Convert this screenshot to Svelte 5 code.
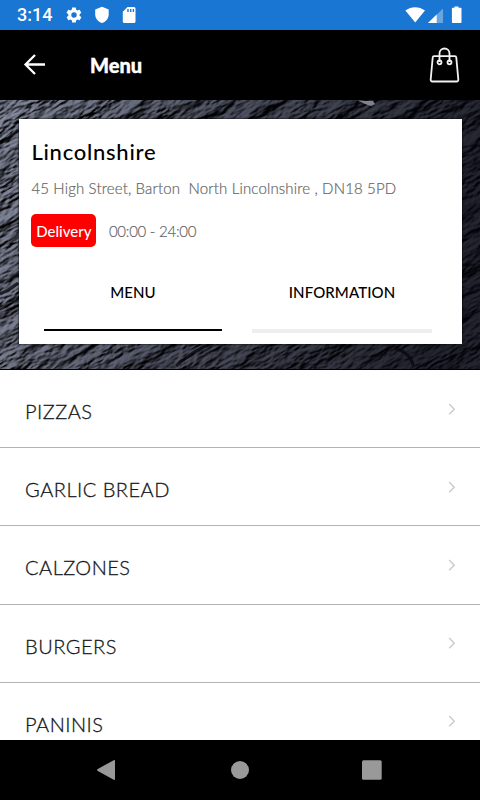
<script lang="ts">
  const address = '45 High Street, Barton \u00a0North Lincolnshire , DN18 5PD'
  const categories = ['PIZZAS', 'GARLIC BREAD', 'CALZONES', 'BURGERS', 'PANINIS']

  let activeTab = $state('menu')
</script>

<div class="screen">
  <div class="status-bar">
    <span class="clock">3:14</span>
    <svg class="gear" width="18" height="18" viewBox="0 0 24 24" fill="#fff">
      <path d="M19.4 13c0-.3.1-.6.1-1s0-.7-.1-1l2.100-1.600c.2-.2.200-.4.100-.6l-2-3.500c-.1-.2-.4-.3-.6-.2l-2.500 1c-.5-.4-1.100-.7-1.700-1l-.4-2.600c0-.3-.2-.5-.5-.5h-4c-.2 0-.5.200-.5.500l-.4 2.600c-.6.300-1.200.6-1.700 1l-2.500-1c-.2-.1-.5 0-.6.200l-2 3.500c-.1.200-.1.500.1.600L4.500 11c0 .3-.1.700-.1 1s0 .7.100 1l-2.100 1.600c-.2.200-.2.400-.1.600l2 3.500c.1.200.4.300.6.200l2.500-1c.5.400 1.100.7 1.700 1l.4 2.600c0 .3.300.5.500.5h4c.3 0 .5-.2.500-.5l.4-2.600c.6-.3 1.200-.6 1.700-1l2.500 1c.2.100.5 0 .6-.2l2-3.500c.1-.2.100-.5-.1-.6L19.400 13zM12 15.600a3.600 3.600 0 1 1 0-7.200 3.600 3.600 0 0 1 0 7.200z" />
    </svg>
    <svg class="shield" width="16" height="18" viewBox="0 0 16 18" fill="#fff">
      <path d="M8 .8 14.700 3.500V8.300C14.700 12.500 12 15.700 8 17 4 15.700 1.200 12.500 1.200 8.300V3.500z" />
    </svg>
    <svg class="sd-card" width="14" height="18" viewBox="0 0 14 18">
      <path d="M4.500 1H11a1.500 1.500 0 0 1 1.500 1.500v13A1.500 1.500 0 0 1 11 17H1.300A1.500 1.500 0 0 1-.2 15.500V5.700z" fill="#fff" />
      <path d="M5 3v3M7.700 3v3M10.400 3v3" stroke="#1976d2" stroke-width="1.400" />
    </svg>
    <svg class="signals" width="60" height="20" viewBox="0 0 60 20" fill="#fff">
      <path d="M-1.600 5.500C4 1 12 1 18 5.500L8.200 17.600z" />
      <path d="M36 3.500V18H21z" opacity=".35" />
      <path d="M29.700 9.500V18H21z" />
      <path d="M47.500 1.500h4v1.300h2c.6 0 1 .4 1 1V17c0 .6-.4 1-1 1h-7.600c-.6 0-1-.4-1-1V3.800c0-.6.4-1 1-1h1.600z" />
    </svg>
  </div>

  <header class="app-bar">
    <button class="back" aria-label="Back">
      <svg width="22" height="22" viewBox="0 0 22 22" fill="none" stroke="#fff" stroke-width="2.300">
        <path d="M22 10.500H2.800M12 1 2.500 10.500 12 20" />
      </svg>
    </button>
    <h1>Menu</h1>
    <button class="bag" aria-label="Basket">
      <svg width="32" height="38" viewBox="0 0 32 38" fill="none" stroke="#f2f2f2" stroke-width="1.800">
        <path d="M5.200 10.200h20.600q1.400 0 1.500 1.400l2 21.700q.2 2.200-1.800 2.200h-24q-2 0-1.800-2.200l2-21.700q.1-1.400 1.500-1.400z" />
        <path d="M10.500 16V7.500a5 5 0 0 1 10 0V16" />
        <circle cx="10.500" cy="16.300" r="2" />
        <circle cx="20.500" cy="16.300" r="2" />
      </svg>
    </button>
  </header>

  <section class="hero">
    <svg class="slate" width="480" height="270" viewBox="0 0 480 270">
      <defs>
        <filter id="grain" x="0" y="0" width="100%" height="100%" color-interpolation-filters="sRGB">
          <feTurbulence type="fractalNoise" baseFrequency="0.02 0.06" numOctaves="5" seed="8" result="coarse" />
          <feTurbulence type="fractalNoise" baseFrequency="0.12 0.4" numOctaves="3" seed="3" result="fine" />
          <feComposite in="coarse" in2="fine" operator="arithmetic" k2="0.75" k3="0.25" />
          <feColorMatrix type="matrix" values="0 0 0 0 0  0 0 0 0 0  0 0 0 0 0  1 0 0 0 0" />
          <feDiffuseLighting surfaceScale="8" diffuseConstant="1" lighting-color="#8d93a8">
            <feDistantLight azimuth="255" elevation="42" />
          </feDiffuseLighting>
        </filter>
        <linearGradient id="shade" x1="0" y1="0" x2="1" y2="0.15">
          <stop offset="0" stop-color="#000" stop-opacity="0" />
          <stop offset="0.45" stop-color="#03030a" stop-opacity="0.4" />
          <stop offset="1" stop-color="#03030a" stop-opacity="0.75" />
        </linearGradient>
      </defs>
      <g transform="rotate(-30 240 135)">
        <rect x="-80" y="-150" width="640" height="570" filter="url(#grain)" />
      </g>
      <rect width="480" height="270" fill="url(#shade)" />
      <path d="M0 43Q8 40 18 30M0 194Q10 190 18 183M176 266Q196 248 214 243M395 248Q412 254 413 266" fill="none" stroke="#050509" stroke-opacity=".75" stroke-width="3" />
      <path d="M357 0l6 1 10 0 2 3-4 2-6-2z" fill="#7e838f" />
      <path d="M0 269.500h480" stroke="#000" />
    </svg>

    <div class="card">
      <h2>Lincolnshire</h2>
      <p class="address">{address}</p>
      <div class="hours">
        <span class="badge">Delivery</span>
        <span class="time">00:00 - 24:00</span>
      </div>
      <div class="tabs">
        <button class:active={activeTab === 'menu'} onclick={() => (activeTab = 'menu')}>
          <span>MENU</span>
        </button>
        <button class:active={activeTab === 'info'} onclick={() => (activeTab = 'info')}>
          <span>INFORMATION</span>
        </button>
      </div>
    </div>
  </section>

  <ul class="categories">
    {#each categories as name}
      <li>
        <span>{name}</span>
        <svg width="8" height="14" viewBox="0 0 8 14" fill="none" stroke="#ccc" stroke-width="1.500">
          <path d="M1.200 2 6.200 7.200l-5 5" />
        </svg>
      </li>
    {/each}
  </ul>

  <nav class="nav-bar">
    <svg width="280" height="24" viewBox="0 0 280 24" fill="#999">
      <path d="M18 3v18q0 1.500-1.300.8L.8 13q-1.500-1 0-2L16.700 2.200q1.300-.7 1.300.8z" />
      <circle cx="143" cy="12" r="9" />
      <rect x="265" y="2.300" width="19.700" height="19.500" rx="1.500" />
    </svg>
  </nav>
</div>

<style>
  :global(body) {
    margin: 0;
    background: #fff;
  }

  .screen {
    display: flex;
    flex-direction: column;
    width: 480px;
    height: 800px;
    overflow: hidden;
    background: #fff;
    font-family: Lato, 'Liberation Sans', sans-serif;
  }

  button {
    padding: 0;
    border: 0;
    background: none;
    color: #000;
    font: inherit;
    cursor: pointer;
  }

  h1,
  h2,
  p,
  ul {
    margin: 0;
    padding: 0;
  }

  svg {
    display: block;
    overflow: visible;
  }

  .status-bar {
    display: flex;
    flex: none;
    align-items: center;
    box-sizing: border-box;
    height: 30px;
    padding: 0 13px 0 17px;
    background: #1976d2;
    color: #fff;
  }

  .clock {
    width: 48px;
    font: 500 18px/32px Roboto, sans-serif;
  }

  .shield {
    margin-left: 11px;
  }

  .sd-card {
    margin-left: 13px;
  }

  .signals {
    margin-left: auto;
  }

  .app-bar {
    display: flex;
    flex: none;
    align-items: center;
    box-sizing: border-box;
    height: 70px;
    padding: 0 19px 0 23px;
    background: #000;
  }

  .app-bar h1 {
    margin-left: 45px;
    color: #fff;
    font-size: 20px;
    font-weight: 900;
    line-height: 30px;
    -webkit-text-stroke: 0.4px #fff;
  }

  .bag {
    margin-left: auto;
  }

  .hero {
    display: grid;
    flex: none;
    height: 270px;
    overflow: hidden;
    background: #25262e;
  }

  .slate,
  .card {
    grid-area: 1 / 1;
  }

  .card {
    z-index: 1;
    box-sizing: border-box;
    width: 443px;
    height: 225px;
    margin: 19px 0 0 19px;
    padding: 19px 12.4px 0;
    background: #fff;
    box-shadow: 0 0 2px #000;
  }

  .card h2 {
    font-size: 22px;
    font-weight: 500;
    line-height: 28px;
    letter-spacing: 0.75px;
  }

  .address {
    margin-top: 11px;
    color: #666;
    font-size: 15px;
    font-weight: 300;
    line-height: 22px;
    letter-spacing: 0.15px;
    white-space: nowrap;
    -webkit-text-stroke: 0.2px #666;
  }

  .hours {
    display: flex;
    align-items: center;
    margin-top: 14px;
  }

  .badge {
    width: 65px;
    height: 33px;
    border-radius: 5px;
    background: #f00;
    color: #fff;
    font-size: 15px;
    font-weight: 500;
    line-height: 34px;
    text-align: center;
  }

  .time {
    margin-left: 12.5px;
    padding-top: 2px;
    color: #666;
    font-size: 15px;
    font-weight: 300;
    line-height: 32px;
    letter-spacing: -0.25px;
    -webkit-text-stroke: 0.2px #666;
  }

  .tabs {
    display: grid;
    grid-template-columns: 178px 180px;
    gap: 30px;
    margin: 34px 0 0 12.6px;
  }

  .tabs button {
    height: 52px;
    border-bottom: 4px solid #eee;
    font-size: 15px;
    font-weight: 500;
    line-height: 22px;
    letter-spacing: 0.1px;
  }

  .tabs span {
    display: block;
    height: 48px;
  }

  .tabs .active {
    height: 50px;
    border-bottom: 2px solid #000;
  }

  .categories {
    flex: 1;
    min-height: 0;
    overflow: hidden;
    list-style: none;
  }

  .categories li {
    display: flex;
    align-items: center;
    justify-content: space-between;
    box-sizing: border-box;
    height: 78.2px;
    padding: 5px 24px 0 25px;
    border-bottom: 1px solid #b4b4b4;
    color: #15151a;
    font-size: 20px;
    font-weight: 300;
    letter-spacing: 0.5px;
    -webkit-text-stroke: 0.3px #15151a;
  }

  .categories svg {
    margin-top: -5px;
  }

  .nav-bar {
    display: flex;
    flex: none;
    align-items: center;
    height: 60px;
    padding-left: 97px;
    background: #000;
  }
</style>
